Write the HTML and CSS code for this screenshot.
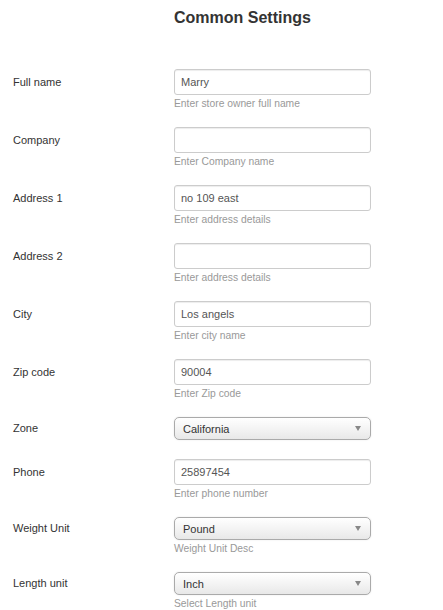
FILE: index.html
```html
<!DOCTYPE html>
<html>
<head>
<meta charset="utf-8">
<link rel="stylesheet" href="styles.css">
</head>
<body>
<div class="page">
  <h2 class="title">Common Settings</h2>
  <form class="form">
    <div class="group">
      <label class="label">Full name</label>
      <div class="controls">
        <input class="input" type="text" value="Marry">
        <div class="help">Enter store owner full name</div>
      </div>
    </div>
    <div class="group">
      <label class="label">Company</label>
      <div class="controls">
        <input class="input" type="text" value="">
        <div class="help">Enter Company name</div>
      </div>
    </div>
    <div class="group">
      <label class="label">Address 1</label>
      <div class="controls">
        <input class="input" type="text" value="no 109 east">
        <div class="help">Enter address details</div>
      </div>
    </div>
    <div class="group">
      <label class="label">Address 2</label>
      <div class="controls">
        <input class="input" type="text" value="">
        <div class="help">Enter address details</div>
      </div>
    </div>
    <div class="group">
      <label class="label">City</label>
      <div class="controls">
        <input class="input" type="text" value="Los angels">
        <div class="help">Enter city name</div>
      </div>
    </div>
    <div class="group">
      <label class="label">Zip code</label>
      <div class="controls">
        <input class="input" type="text" value="90004">
        <div class="help">Enter Zip code</div>
      </div>
    </div>
    <div class="group">
      <label class="label sel-label">Zone</label>
      <div class="controls">
        <div class="select select-lone"><span>California</span><span class="arrow"></span></div>
      </div>
    </div>
    <div class="group">
      <label class="label">Phone</label>
      <div class="controls">
        <input class="input" type="text" value="25897454">
        <div class="help">Enter phone number</div>
      </div>
    </div>
    <div class="group">
      <label class="label sel-label">Weight Unit</label>
      <div class="controls">
        <div class="select"><span>Pound</span><span class="arrow"></span></div>
        <div class="help">Weight Unit Desc</div>
      </div>
    </div>
    <div class="group">
      <label class="label sel-label">Length unit</label>
      <div class="controls">
        <div class="select"><span>Inch</span><span class="arrow"></span></div>
        <div class="help">Select Length unit</div>
      </div>
    </div>
  </form>
</div>
</body>
</html>
```
FILE: styles.css
```css
html, body {
  margin: 0;
  padding: 0;
  background: #fff;
}
body {
  font-family: "Liberation Sans", Arial, sans-serif;
  color: #333;
}
.page {
  padding: 0 0 0 13px;
}
.title {
  margin: 0 0 0 161px;
  padding-top: 8px;
  font-size: 16px;
  line-height: 19px;
  font-weight: bold;
  color: #333;
  height: 61px;
}
.form {
  display: flex;
  flex-direction: column;
}
.group {
  display: grid;
  grid-template-columns: 161px 197px;
  align-items: start;
  margin-bottom: 18px;
}
.label {
  font-size: 11px;
  line-height: 26px;
  height: 26px;
  color: #333;
}
.sel-label {
  line-height: 23px;
  height: 23px;
}
.controls {
  display: flex;
  flex-direction: column;
}
.input {
  box-sizing: border-box;
  width: 197px;
  height: 26px;
  margin: 0;
  padding: 0 6px;
  border: 1px solid #ccc;
  border-radius: 3px;
  box-shadow: inset 0 1px 1px rgba(0,0,0,0.075);
  font-family: "Liberation Sans", Arial, sans-serif;
  font-size: 11px;
  color: #555;
  background: #fff;
  outline: none;
}
.select {
  box-sizing: border-box;
  width: 197px;
  height: 23px;
  border: 1px solid #aaa;
  border-radius: 5px;
  background: linear-gradient(#ffffff 0%, #f4f4f4 50%, #e8e8e8 100%);
  box-shadow: 0 0 2px rgba(0,0,0,0.1);
  display: flex;
  align-items: center;
  justify-content: space-between;
  padding: 0 9px 0 8px;
  font-size: 11px;
  color: #333;
}
.select-lone {
  margin-bottom: 1px;
}
.arrow {
  width: 0;
  height: 0;
  border-left: 3px solid transparent;
  border-right: 3px solid transparent;
  border-top: 5px solid #888;
}
.help {
  margin-top: 3px;
  font-size: 10.3px;
  line-height: 11px;
  color: #999;
}
```
